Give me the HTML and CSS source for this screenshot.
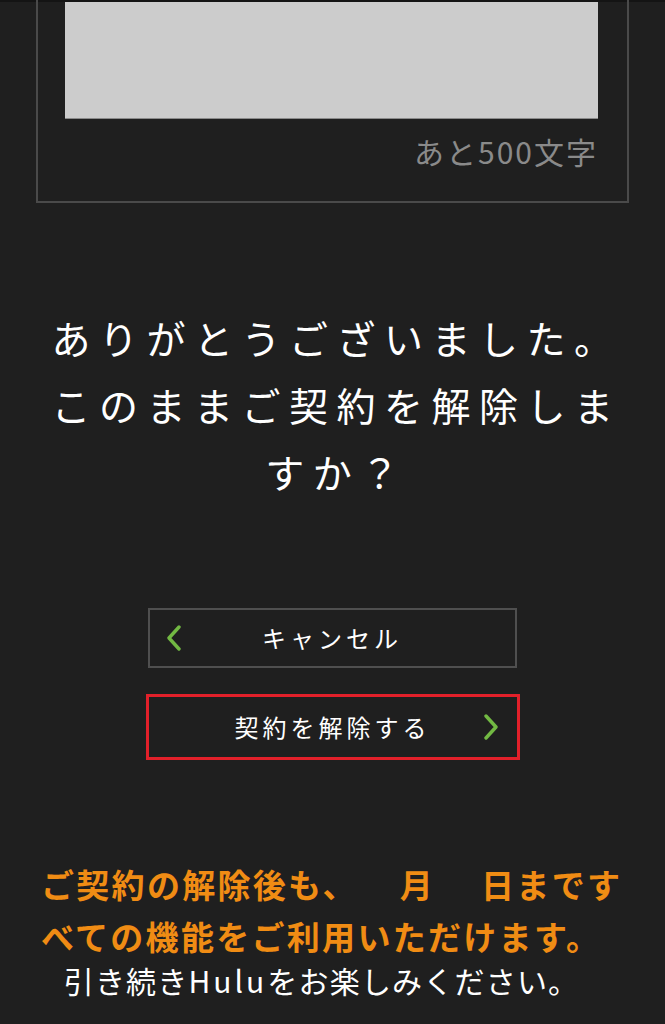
FILE: index.html
```html
<!DOCTYPE html>
<html lang="ja">
<head>
<meta charset="utf-8">
<title>解約の確認</title>
<link rel="stylesheet" href="styles.css">
</head>
<body>
<div class="topbar"></div>
<section class="feedback">
  <textarea class="comment" maxlength="500"></textarea>
  <p class="counter">あと500文字</p>
</section>

<h1 class="question">ありがとうございました。<br>このままご契約を解除しますか？</h1>

<div class="actions">
  <button class="btn btn-cancel" type="button">
    <span class="chev chev-left"><svg viewBox="0 0 16 26" width="16" height="26"><polyline points="13,2 3,13 13,24" fill="none" stroke="#72b943" stroke-width="3.4" stroke-linecap="round" stroke-linejoin="round"/></svg></span>
    <span class="label">キャンセル</span>
    <span class="chev"></span>
  </button>
  <button class="btn btn-confirm" type="button">
    <span class="chev"></span>
    <span class="label">契約を解除する</span>
    <span class="chev chev-right"><svg viewBox="0 0 16 26" width="16" height="26"><polyline points="3,2 13,13 3,24" fill="none" stroke="#72b943" stroke-width="3.4" stroke-linecap="round" stroke-linejoin="round"/></svg></span>
  </button>
</div>

<p class="notice">ご契約の解除後も、<span class="date month">月</span><span class="date day">日</span>まです<br>べての機能をご利用いただけます。</p>
<p class="notice-sub">引き続き<span class="brand">Hulu</span>をお楽しみください。</p>
</body>
</html>
```

FILE: styles.css
```css
html, body {
  margin: 0;
  padding: 0;
}

body {
  background: #1f1f1f;
  color: #ffffff;
  font-family: "Noto Sans CJK JP", "Noto Sans", sans-serif;
  width: 665px;
}

.topbar {
  height: 2px;
  background: #141414;
}

.feedback {
  margin: -2px 36px 0 36px;
  border: 2px solid #4a4a4a;
  border-top: none;
  padding: 2px 29px 30px 27px;
}

.comment {
  display: block;
  box-sizing: border-box;
  width: 100%;
  height: 117px;
  margin: 0;
  padding: 4px;
  border: none;
  border-bottom: 1px solid #8a8a8a;
  background: #cccccc;
  font-family: inherit;
  outline: none;
  resize: none;
}

.counter {
  margin: 12px 0 0 0;
  text-align: right;
  font-size: 30px;
  line-height: 40px;
  letter-spacing: 2px;
  color: #8a8a8a;
}

.question {
  margin: 101px 0 0 0;
  padding: 0 36px 0 44px;
  text-align: center;
  font-size: 39px;
  font-weight: 400;
  letter-spacing: 8.5px;
  line-height: 67px;
  color: #ffffff;
}

.actions {
  margin-top: 103px;
  display: flex;
  flex-direction: column;
  align-items: center;
  gap: 26px;
}

.btn {
  box-sizing: border-box;
  display: grid;
  grid-template-columns: 1fr auto 1fr;
  align-items: center;
  background: transparent;
  color: #ffffff;
  font-family: inherit;
  font-size: 24px;
  letter-spacing: 4px;
  cursor: pointer;
  margin: 0;
}

.btn-cancel {
  width: 369px;
  height: 60px;
  border: 2px solid #4f4f4f;
  padding: 0 16px;
  margin-left: -1px;
}

.btn-confirm {
  width: 374px;
  height: 66px;
  border: 3px solid #e2202a;
  padding: 0 18px;
}

.label {
  line-height: 30px;
}

.chev {
  display: flex;
  align-items: center;
}

.chev-left {
  justify-content: flex-start;
}

.chev-right {
  justify-content: flex-end;
}

.notice {
  margin: 98px 0 0 0;
  padding: 0 20px 0 41px;
  font-size: 33px;
  font-weight: 700;
  letter-spacing: 2.3px;
  line-height: 52px;
  color: #f08c14;
}

.date.month {
  margin-left: 42px;
}

.date.day {
  margin-left: 46px;
}

.notice-sub {
  margin: 0;
  padding: 0 22px 0 0;
  text-align: center;
  font-size: 30px;
  letter-spacing: 1.2px;
  line-height: 36px;
  color: #ffffff;
}

.brand {
  letter-spacing: 3px;
}
```
